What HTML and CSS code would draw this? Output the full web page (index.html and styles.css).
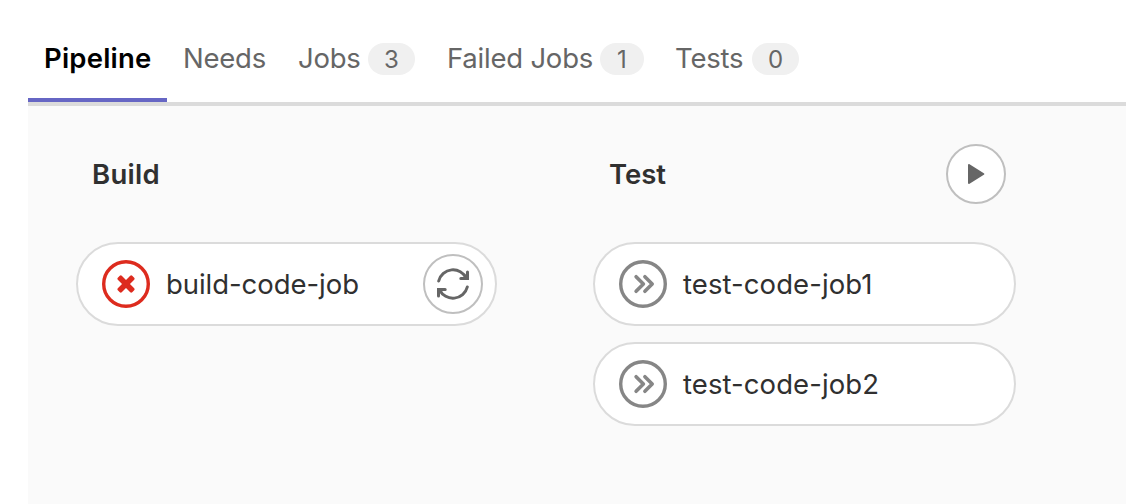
FILE: index.html
```html
<!DOCTYPE html>
<html lang="en">
<head>
<meta charset="utf-8">
<title>Pipeline</title>
<link rel="stylesheet" href="styles.css">
</head>
<body>
<nav class="tabs">
  <a class="tab tab-pipeline active"><span>Pipeline</span></a>
  <a class="tab tab-needs"><span>Needs</span></a>
  <a class="tab tab-jobs"><span>Jobs</span><span class="badge">3</span></a>
  <a class="tab tab-failed"><span>Failed Jobs</span><span class="badge badge-narrow">1</span></a>
  <a class="tab tab-tests"><span>Tests</span><span class="badge">0</span></a>
</nav>
<main class="graph">
  <section class="stage stage-build">
    <header class="stage-head"><h2 class="title-build">Build</h2></header>
    <div class="job">
      <svg class="status" viewBox="0 0 48 48"><circle class="ring failed" cx="24" cy="24" r="22.3"/><g class="cross" transform="rotate(45 24 24)"><rect x="13.8" y="21.2" width="20.4" height="5.6" rx="1.4"/><rect x="21.2" y="13.8" width="5.6" height="20.4" rx="1.4"/></g></svg>
      <span class="name name-build">build-code-job</span>
      <button class="action" aria-label="Retry"><svg class="retry" viewBox="0 0 32 32"><path d="M1.7 13A14.8 14.8 0 0 1 29.4 10.2M30.5 4v6.6H23.8M30.3 19A14.8 14.8 0 0 1 2.6 21.8M1.5 28v-6.6H8.2"/></svg></button>
    </div>
  </section>
  <section class="stage stage-test">
    <header class="stage-head"><h2 class="title-test">Test</h2>
      <button class="action" aria-label="Play"><svg class="play" viewBox="0 0 17 20"><path d="M1 1v18L15.3 10z"/></svg></button>
    </header>
    <div class="job">
      <svg class="status" viewBox="0 0 48 48"><circle class="ring skipped" cx="24" cy="24" r="22.3"/><path class="chevrons" d="M17.1 16.7l7.3 7.3-7.3 7.3M25.9 16.7l7.3 7.3-7.3 7.3"/></svg>
      <span class="name name-test">test-code-job1</span>
    </div>
    <div class="job">
      <svg class="status" viewBox="0 0 48 48"><circle class="ring skipped" cx="24" cy="24" r="22.3"/><path class="chevrons" d="M17.1 16.7l7.3 7.3-7.3 7.3M25.9 16.7l7.3 7.3-7.3 7.3"/></svg>
      <span class="name name-test">test-code-job2</span>
    </div>
  </section>
</main>
</body>
</html>
```

FILE: styles.css
```css
* { box-sizing: border-box; }
body {
  margin: 0;
  height: 504px;
  padding-left: 28px;
  display: flex;
  flex-direction: column;
  overflow: hidden;
  background: #fff;
  color: #303030;
  font: 400 27.5px/40px Inter, "Liberation Sans", sans-serif;
}
.tabs {
  height: 106px;
  flex: none;
  display: flex;
  border-bottom: 4px solid #dbdbdb;
}
.tab {
  display: flex;
  align-items: center;
  justify-content: space-between;
  height: 102px;
  padding: 20px 16px 4px;
  color: #666;
  letter-spacing: -0.22px;
  white-space: nowrap;
}
.tab > span:first-child { padding-bottom: 2px; }
.tab.active {
  padding-bottom: 0;
  border-bottom: 4px solid #6666c4;
  color: #000;
  font-weight: 600;
  letter-spacing: 0.2px;
}
.tab-pipeline { width: 139px; }
.tab-needs { width: 115px; }
.tab-jobs { width: 149px; }
.tab-failed { width: 229px; }
.tab-tests { width: 155px; padding-left: 15px; }
.badge {
  width: 47px;
  height: 32px;
  border-radius: 16px;
  background: #f0f0f0;
  font-size: 24px;
  letter-spacing: 0;
  line-height: 33px;
  text-align: center;
}
.badge-narrow { width: 44px; }
.graph {
  flex: 1;
  display: flex;
  gap: 96px;
  padding: 38px 48px 0;
  background: #fafafa;
}
.stage { display: flex; flex-direction: column; gap: 16px; }
.stage-build { width: 421px; }
.stage-test { width: 423px; }
.stage-head {
  display: flex;
  align-items: center;
  justify-content: space-between;
  height: 60px;
  margin-bottom: 22px;
  padding: 0 10px 0 16px;
}
.stage-head h2 { margin: 0; font-size: 27.5px; font-weight: 600; }
.title-build { letter-spacing: 0.3px; }
.job {
  display: flex;
  align-items: center;
  height: 84px;
  padding: 0 12px 0 24px;
  border: 2px solid #dbdbdb;
  border-radius: 42px;
  background: #fff;
}
.status { width: 48px; height: 48px; margin-right: 16px; flex: none; }
.ring { fill: none; stroke-width: 3.4; }
.failed { stroke: #dd2b1e; }
.skipped { stroke: #868686; }
.cross { fill: #dd2b1e; }
.chevrons { fill: none; stroke: #868686; stroke-width: 3.6; stroke-linecap: round; stroke-linejoin: round; }
.name { white-space: nowrap; }
.name-build { letter-spacing: -0.05px; }
.name-test { letter-spacing: 0.08px; }
.action {
  display: flex;
  align-items: center;
  justify-content: center;
  flex: none;
  width: 60px;
  height: 60px;
  margin-left: auto;
  padding: 0;
  border: 2px solid #bfbfbf;
  border-radius: 50%;
  background: #fff;
}
.retry { width: 32px; height: 32px; fill: none; stroke: #666; stroke-width: 3; stroke-linecap: round; }
.play { width: 17px; height: 20px; fill: #666; stroke: #666; stroke-width: 2; stroke-linejoin: round; }
```
